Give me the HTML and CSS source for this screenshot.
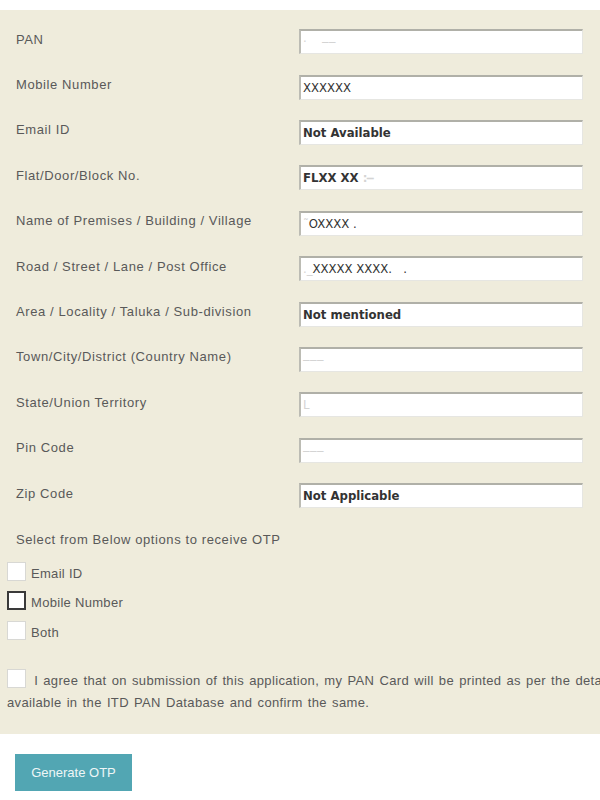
FILE: index.html
```html
<!DOCTYPE html>
<html lang="en">
<head>
  <meta charset="UTF-8" />
  <meta name="viewport" content="width=device-width, initial-scale=1.0"/>
  <title>PAN Reprint - OTP</title>
  <link rel="stylesheet" href="styles.css">
</head>
<body>
  <div class="panel">
    <div class="row"><div class="label">PAN</div><div class="field"><span class="smudge">·&nbsp;&nbsp;&nbsp;&nbsp;⎯⎯</span></div></div>
    <div class="row"><div class="label">Mobile Number</div><div class="field">XXXXXX</div></div>
    <div class="row"><div class="label">Email ID</div><div class="field bold">Not Available</div></div>
    <div class="row"><div class="label">Flat/Door/Block No.</div><div class="field bold">FLXX XX <span class="smudge">:⎯</span></div></div>
    <div class="row"><div class="label">Name of Premises / Building / Village</div><div class="field"><span class="smudge">˜</span>OXXXX .</div></div>
    <div class="row"><div class="label">Road / Street / Lane / Post Office</div><div class="field"><span class="smudge">._</span>XXXXX XXXX.&nbsp;&nbsp;&nbsp;.</div></div>
    <div class="row"><div class="label">Area / Locality / Taluka / Sub-division</div><div class="field bold">Not mentioned</div></div>
    <div class="row"><div class="label">Town/City/District (Country Name)</div><div class="field"><span class="smudge">⎯⎯⎯</span></div></div>
    <div class="row"><div class="label">State/Union Territory</div><div class="field"><span class="smudge">L</span></div></div>
    <div class="row"><div class="label">Pin Code</div><div class="field"><span class="smudge">⎯⎯⎯</span></div></div>
    <div class="row"><div class="label">Zip Code</div><div class="field bold">Not Applicable</div></div>

    <div class="otp-title">Select from Below options to receive OTP</div>
    <div class="options">
      <label class="option"><input type="checkbox"> Email ID</label>
      <label class="option"><input type="checkbox" class="focused"> Mobile Number</label>
      <label class="option"><input type="checkbox"> Both</label>
    </div>

    <div class="agree">
      <input type="checkbox"> I agree that on submission of this application, my PAN Card will be printed as per the details<br>
      available in the ITD PAN Database and confirm the same.
    </div>
  </div>

  <button class="btn-otp">Generate OTP</button>
</body>
</html>
```

FILE: styles.css
```css
html, body {
  overflow: hidden;
}
body {
  margin: 0;
  padding-top: 10px;
  background: #fff;
  font-family: "Liberation Sans", Arial, sans-serif;
  color: #595959;
}
.panel {
  width: 760px;
  background: #efecdc;
  padding: 9px 0 20px 0;
}
.row {
  display: flex;
  align-items: center;
  height: 45.4px;
}
.label {
  width: 283px;
  padding-left: 16px;
  font-size: 13px;
  letter-spacing: 0.6px;
  margin-top: -5px;
}
.field {
  box-sizing: border-box;
  width: 284px;
  height: 25px;
  background: #fff;
  border-top: 2px solid #b0b0a8;
  border-left: 2px solid #bcbcb4;
  border-right: 1px solid #e6e6e2;
  border-bottom: 1px solid #e6e6e2;
  padding: 3px 2px;
  font-family: "DejaVu Sans Condensed", "DejaVu Sans", sans-serif;
  font-size: 13px;
  color: #333;
  white-space: nowrap;
  overflow: hidden;
}
.bold {
  font-weight: bold;
}
.smudge {
  color: #d4d4d4;
}
.otp-title {
  padding: 14px 0 0 16px;
  font-size: 13px;
  letter-spacing: 0.6px;
}
.options {
  display: flex;
  flex-direction: column;
  gap: 10px;
  padding: 15px 0 0 7px;
}
.option {
  display: flex;
  align-items: flex-end;
  gap: 5px;
  font-size: 13px;
  letter-spacing: 0.3px;
  line-height: 14px;
}
.option:nth-child(3) {
  margin-top: 1px;
}
input[type="checkbox"] {
  appearance: none;
  -webkit-appearance: none;
  margin: 0;
  width: 19px;
  height: 19px;
  box-sizing: border-box;
  background: #fff;
  border: 1px solid #d8d8d4;
  vertical-align: -3px;
}
input.focused {
  border: 2px solid #3a3a3a;
}
.agree {
  padding: 29px 0 0 7px;
  font-size: 13px;
  letter-spacing: 0.35px;
  word-spacing: 1.2px;
  line-height: 22px;
}
.agree input {
  margin-right: 3px;
}
.btn-otp {
  display: block;
  margin: 20px 0 0 15px;
  width: 117px;
  height: 37px;
  background: #52a6b3;
  border: none;
  color: #eef6f7;
  font-family: "Liberation Sans", Arial, sans-serif;
  font-size: 13px;
}
```
